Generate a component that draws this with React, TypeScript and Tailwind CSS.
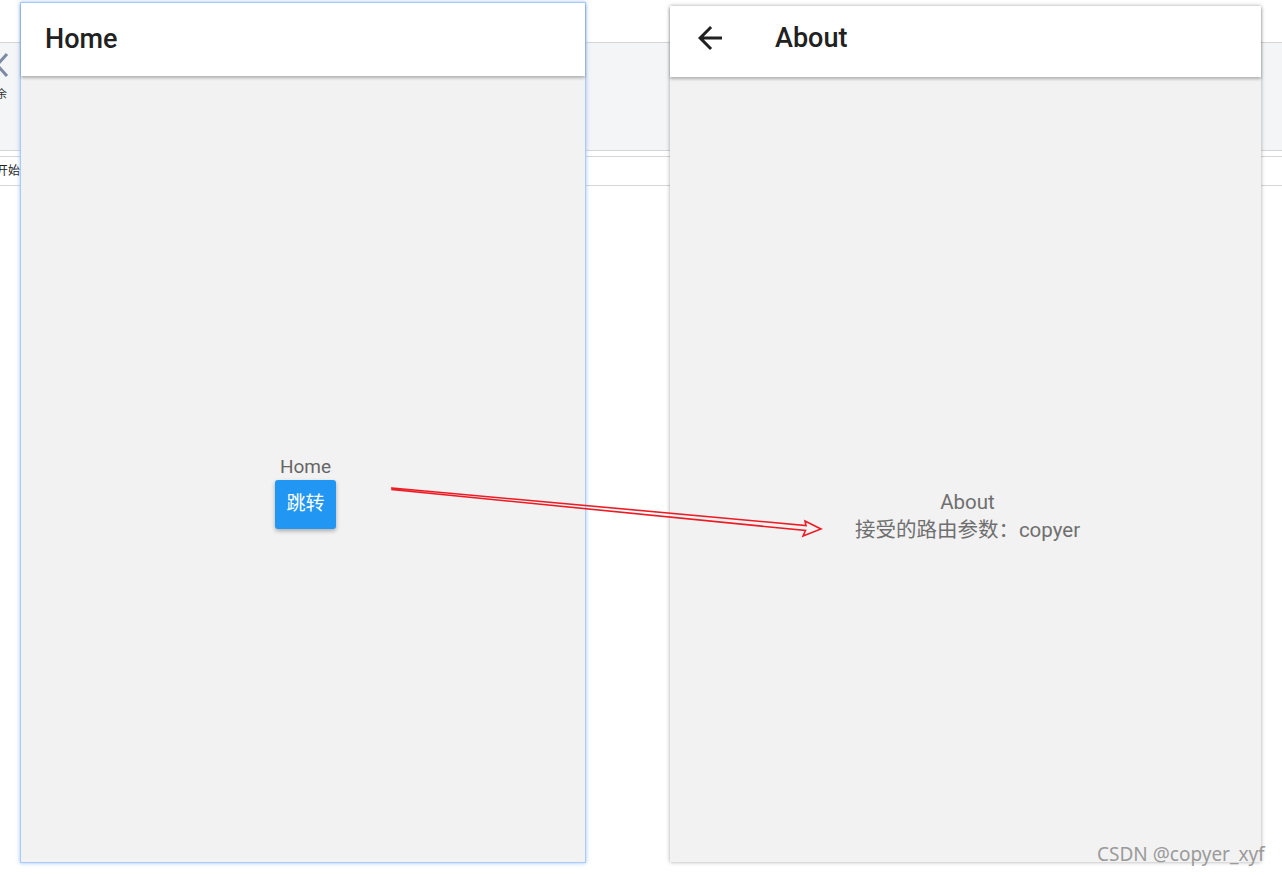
import React from 'react';

const FONT = { fontFamily: 'Roboto, "Noto Sans CJK SC", sans-serif' };

function BackdropStrip() {
  return (
    <div className="pt-[42px]">
      <div className="relative h-[108px] border-t border-[#d6d6d6] bg-[#f4f5f7]">
        <svg className="absolute left-[-5px] top-[9px]" width="14" height="26" viewBox="0 0 14 26">
          <path d="M12 2 L2 13 L12 24" stroke="#7d8aa3" strokeWidth="3" fill="none" />
        </svg>
        <span className="absolute left-[-4px] top-[44px] text-[11px] text-[#333]" style={FONT}>
          余
        </span>
      </div>
      <div className="h-[6px] border-t border-[#d6d6d6] bg-white" />
      <div className="relative h-[30px] border-t border-b border-[#d6d6d6] bg-white">
        <span className="absolute left-[-4px] top-[5px] text-[12px] text-[#222]" style={FONT}>
          开始
        </span>
      </div>
    </div>
  );
}

function HomeWindow() {
  return (
    <div className="absolute left-[20px] top-[2px] flex h-[861px] w-[566px] flex-col border border-[#a9cbf7] bg-[#f2f2f2] shadow-[0_0_4px_rgba(120,170,245,0.7)]">
      <div className="z-10 flex h-[73px] items-center bg-white pl-[24px] shadow-[0_2px_3px_rgba(0,0,0,0.28)]">
        <span className="text-[27px] font-medium text-[#212121]" style={FONT}>
          Home
        </span>
      </div>
      <div className="flex flex-1 flex-col items-center justify-center pl-[5px] pt-[46px]" style={FONT}>
        <span className="text-[19px] leading-[22px] text-[#666]">Home</span>
        <button className="mt-[2px] h-[49px] w-[61px] rounded-[3px] bg-[#2196f3] text-[19px] text-white shadow-[0_2px_4px_rgba(0,0,0,0.3)]">
          跳转
        </button>
      </div>
    </div>
  );
}

function AboutWindow() {
  return (
    <div className="absolute left-[670px] top-[6px] flex h-[856px] w-[591px] flex-col bg-[#f2f2f2] shadow-[0_0_4px_rgba(0,0,0,0.35)]">
      <div className="z-10 flex h-[71px] items-center bg-white pb-[7px] pl-[22px] shadow-[0_2px_3px_rgba(0,0,0,0.28)]">
        <svg width="36" height="36" viewBox="0 0 24 24" className="mr-[47px]">
          <path d="M20 11H7.83l5.59-5.59L12 4l-8 8 8 8 1.41-1.41L7.83 13H20v-2z" fill="#212121" />
        </svg>
        <span className="text-[27px] font-medium text-[#212121]" style={FONT}>
          About
        </span>
      </div>
      <div className="flex flex-1 flex-col items-center justify-center pl-[4px] pt-[92px] text-[20.5px] leading-[28px] text-[#6f6f6f]" style={FONT}>
        <span>About</span>
        <span>接受的路由参数：copyer</span>
      </div>
    </div>
  );
}

export default function App() {
  return (
    <div className="relative h-[875px] w-[1282px] overflow-hidden bg-white">
      <BackdropStrip />
      <HomeWindow />
      <AboutWindow />
      <svg className="pointer-events-none absolute left-0 top-0" width="1282" height="875">
        <polygon
          points="392,488 806,525.5 805,521 821,529 803,536 805.5,530.5 392,489.5"
          fill="none"
          stroke="#ec1c24"
          strokeWidth="1.6"
          strokeLinejoin="miter"
        />
      </svg>
      <span
        className="absolute left-[1097px] top-[840px] text-[19px] text-[#9a9a9a]"
        style={{ fontFamily: '"Noto Sans", sans-serif' }}
      >
        CSDN @copyer_xyf
      </span>
    </div>
  );
}
